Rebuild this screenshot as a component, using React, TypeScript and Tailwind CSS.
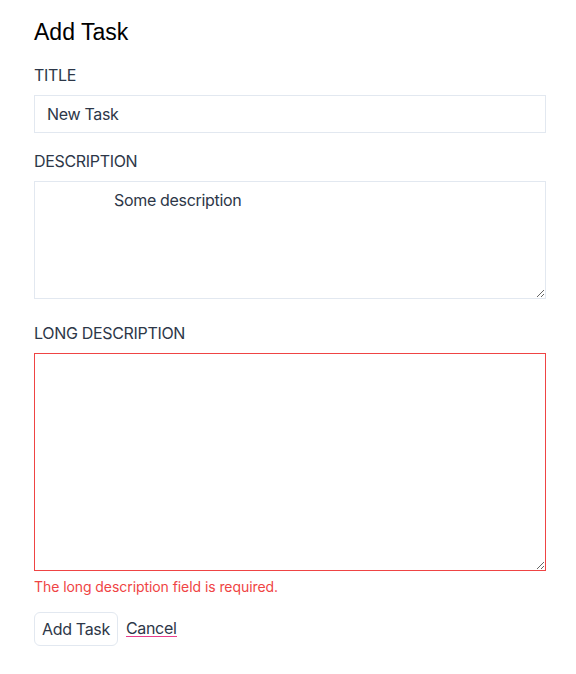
import { useState } from "react";

const labelClass = "block text-base leading-6 uppercase text-[#2d3748]";
const fieldClass =
  "block w-full border bg-white px-3 py-1.5 text-base leading-6 text-[#2d3748] outline-none";

export default function App() {
  const [title, setTitle] = useState("New Task");
  const [description, setDescription] = useState("Some description");
  const [longDescription, setLongDescription] = useState("");

  return (
    <div className="min-h-screen bg-white font-['Inter',sans-serif] tracking-[-0.02em]">
      <form className="pl-[34px] pr-[30px] pt-4" onSubmit={(e) => e.preventDefault()}>
        <h1 className="font-['Liberation_Sans',Arial,sans-serif] text-[23px] leading-8 tracking-normal text-black">
          Add Task
        </h1>

        <label htmlFor="title" className={`${labelClass} mt-[15px]`}>
          Title
        </label>
        <input
          id="title"
          type="text"
          value={title}
          onChange={(e) => setTitle(e.target.value)}
          className={`${fieldClass} mt-2 h-[38px] border-[#e2e8f0]`}
        />

        <label htmlFor="description" className={`${labelClass} mt-4`}>
          Description
        </label>
        <textarea
          id="description"
          value={description}
          onChange={(e) => setDescription(e.target.value)}
          className={`${fieldClass} mt-2 h-[118px] border-[#e2e8f0] pl-[79px]`}
        />

        <label htmlFor="long_description" className={`${labelClass} mt-[22px]`}>
          Long Description
        </label>
        <textarea
          id="long_description"
          value={longDescription}
          onChange={(e) => setLongDescription(e.target.value)}
          className={`${fieldClass} mt-2 h-[218px] border-[#ef4444]`}
        />
        <p className="mt-[6px] text-sm leading-5 tracking-[-0.005em] text-[#ef4444]">
          The long description field is required.
        </p>

        <div className="mt-[15px] flex items-center gap-2">
          <button
            type="submit"
            className="h-[34px] rounded-md border border-[#e2e8f0] bg-white px-[7px] text-base leading-6 text-[#2d3748]"
          >
            Add Task
          </button>
          <a
            href="#"
            className="inline-block border-b border-[#e83e8c] text-base leading-[15px] text-[#2d3748]"
          >
            Cancel
          </a>
        </div>
      </form>
    </div>
  );
}
